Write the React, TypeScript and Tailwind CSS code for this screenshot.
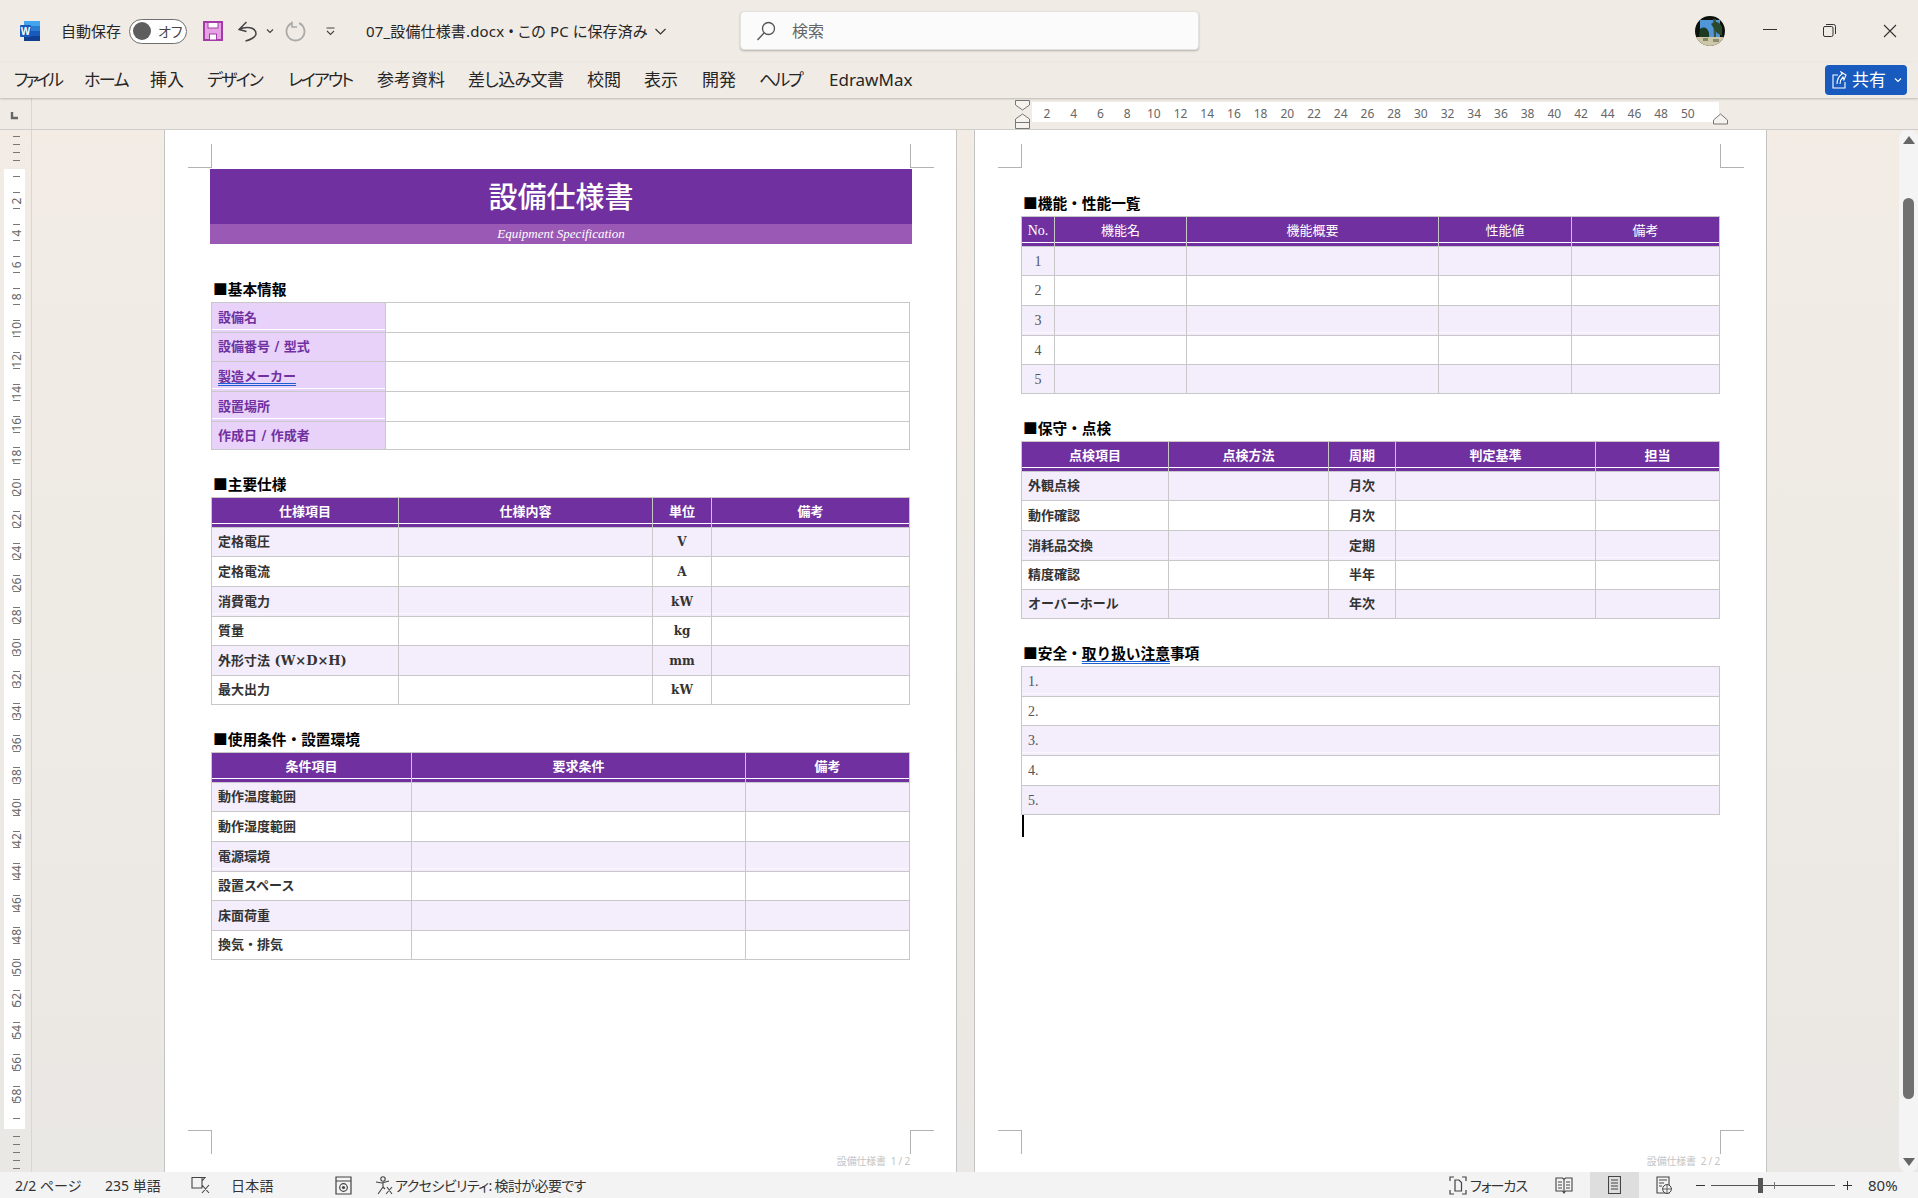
import React from 'react';

const uiFont = "font-['Noto_Sans','Noto_Sans_CJK_JP',sans-serif] [font-feature-settings:'palt']";
const docFont = "font-['Liberation_Serif','Noto_Sans_CJK_JP',serif] [font-feature-settings:normal]";
const boldFont = "font-['DejaVu_Serif','Noto_Sans_CJK_JP',serif]";

const rowH: Record<number, string> = { 28: 'h-[28px]', 29: 'h-[29px]', 30: 'h-[30px]' };

// white hairline Word leaves near the bottom of some cells
const seam = 'shadow-[inset_0_-2px_0_#F3EDFC,inset_0_-3px_0_#FBF9FF]';
const labelSeam = 'shadow-[inset_0_-2px_0_#E8D2FA,inset_0_-3px_0_#FFFFFF]';

const TABS: [string, string][] = [
  ['ファイル', 'w-[70px] tracking-[-3px]'],
  ['ホーム', 'w-[66px] tracking-[-1.6px]'],
  ['挿入', 'w-[57px]'],
  ['デザイン', 'w-[81px] tracking-[-1.8px]'],
  ['レイアウト', 'w-[89px] tracking-[-2px]'],
  ['参考資料', 'w-[91px]'],
  ['差し込み文書', 'w-[119px] tracking-[-0.6px]'],
  ['校閲', 'w-[57px]'],
  ['表示', 'w-[58px]'],
  ['開発', 'w-[57px]'],
  ['ヘルプ', 'w-[70px] tracking-[-2px]'],
  ['EdrawMax', 'w-[90px]'],
];

function WordIcon() {
  return (
    <svg width="20" height="20" viewBox="0 0 20 20" className="shrink-0">
      <rect x="4" y="0" width="16" height="5" fill="#41A5EE" />
      <rect x="4" y="5" width="16" height="5" fill="#2B7CD3" />
      <rect x="4" y="10" width="16" height="5" fill="#185ABD" />
      <rect x="4" y="15" width="16" height="5" fill="#103F91" />
      <rect x="0" y="4" width="11" height="12" rx="1" fill="#185ABD" />
      <text x="5.5" y="13.5" textAnchor="middle" fontSize="10" fontWeight="700" fill="#fff" fontFamily="Liberation Sans">W</text>
    </svg>
  );
}

function SaveIcon() {
  return (
    <svg width="20" height="20" viewBox="0 0 20 20" className="ml-[16px] shrink-0">
      <path d="M1 1H19V19H1Z" fill="#E5A3E3" stroke="#A53BA8" strokeWidth="2" />
      <rect x="5" y="1.5" width="10" height="5.5" fill="#fff" stroke="#A53BA8" />
      <rect x="6.5" y="13" width="7" height="6" fill="#fff" stroke="#A53BA8" />
    </svg>
  );
}

function Small({ className = '' }: { className?: string }) {
  return (
    <svg width="8" height="6" viewBox="0 0 8 6" className={`shrink-0 ${className}`}>
      <path d="M1 1.5 4 4.5 7 1.5" fill="none" stroke="#444" strokeWidth="1.2" />
    </svg>
  );
}

function Avatar() {
  return (
    <svg width="30" height="30" viewBox="0 0 30 30" className="ml-[496px] mt-[-1px] shrink-0">
      <defs>
        <clipPath id="av"><circle cx="15" cy="15" r="15" /></clipPath>
      </defs>
      <g clipPath="url(#av)">
        <rect width="30" height="30" fill="#0d120c" />
        <rect x="5" y="4" width="20" height="17" fill="#4f97d8" />
        <path d="M5 13 C9 10 13 12 14 17 L14 21 L4 21Z" fill="#1d3a22" />
        <path d="M18 3 L21 3 L21 21 L19 21Z" fill="#40533a" />
        <path d="M16 8 C20 4 26 6 27 12 L27 20 L22 17Z" fill="#2b4a2d" />
        <rect x="0" y="21" width="30" height="9" fill="#cdc7a8" />
        <rect x="8" y="22" width="5" height="3" fill="#7f8a6b" />
        <rect x="18" y="23" width="6" height="3" fill="#8c8a70" />
      </g>
    </svg>
  );
}

function TitleBar() {
  return (
    <div className="flex h-[62px] shrink-0 items-center pl-[20px] text-[15px] text-[#262626]">
      <WordIcon />
      <span className="ml-[21px] w-[60px] shrink-0 whitespace-nowrap">自動保存</span>
      <div className="ml-[8px] flex h-[25px] w-[58px] shrink-0 items-center rounded-full border border-[#6f6f6f] bg-white pl-[3px]">
        <span className="h-[18px] w-[18px] rounded-full bg-[#5e5e5e]" />
        <span className="ml-[7px] text-[14px] text-[#444]">オフ</span>
      </div>
      <SaveIcon />
      <svg width="19" height="21" viewBox="0 0 19 21" className="ml-[15px] shrink-0">
        <path d="M8.5 1 1 8.5 8.5 10.5M1 8.5C8 5 18 6 18 13 18 16 12 19 7.5 20" fill="none" stroke="#444" strokeWidth="1.5" />
      </svg>
      <Small className="ml-[9px]" />
      <svg width="21" height="21" viewBox="0 0 21 21" className="ml-[11px] shrink-0">
        <path d="M7 2.2A9 9 0 1 0 14 2.2" fill="none" stroke="#aaa" strokeWidth="1.8" />
        <path d="M7 0.5 7 6 12 6" fill="none" stroke="#aaa" strokeWidth="1.6" />
      </svg>
      <svg width="9" height="9" viewBox="0 0 9 9" className="ml-[20px] shrink-0">
        <path d="M0.5 1H8.5M1 4 4.5 7.5 8 4" fill="none" stroke="#444" strokeWidth="1.1" />
      </svg>
      <div className="ml-[31px] flex w-[374px] shrink-0 items-center whitespace-nowrap">
        <span className="tracking-[0.15px]">07_設備仕様書.docx • この PC に保存済み</span>
        <svg width="11" height="7" viewBox="0 0 11 7" className="ml-[7px] shrink-0">
          <path d="M0.5 1 5.5 6 10.5 1" fill="none" stroke="#333" strokeWidth="1.2" />
        </svg>
      </div>
      <div className="mt-[-1px] flex h-[39px] w-[459px] shrink-0 items-center rounded-[4px] border border-[#e4e2df] bg-[#fbfbfb] pl-[15px] shadow-[0_1px_2px_rgba(0,0,0,0.25)]">
        <svg width="20" height="20" viewBox="0 0 20 20" className="shrink-0">
          <circle cx="12.5" cy="7.5" r="6" fill="none" stroke="#555" strokeWidth="1.3" />
          <path d="M8 12 1.5 19" stroke="#555" strokeWidth="1.4" />
        </svg>
        <span className="ml-[16px] text-[16px] text-[#666]">検索</span>
      </div>
      <Avatar />
      <div className="ml-[38px] mt-[-3px] h-px w-[14px] shrink-0 bg-[#333]" />
      <svg width="13" height="13" viewBox="0 0 13 13" className="ml-[46px] mt-[-1px] shrink-0">
        <rect x="0.5" y="2.5" width="9.5" height="10" rx="1.5" fill="none" stroke="#333" />
        <path d="M3 0.5H10.5A2 2 0 0 1 12.5 2.5V10" fill="none" stroke="#333" />
      </svg>
      <svg width="14" height="14" viewBox="0 0 14 14" className="ml-[47px] mt-[-1px] shrink-0">
        <path d="M1 1 13 13M13 1 1 13" stroke="#333" strokeWidth="1.1" />
      </svg>
    </div>
  );
}

function TabBar() {
  return (
    <div className="relative z-10 flex h-[36px] shrink-0 items-center pl-[14px] pr-[11px] text-[17px] text-[#262626] shadow-[0_1px_2px_rgba(0,0,0,0.22)]">
      {TABS.map(([name, w]) => (
        <span key={name} className={`${w} shrink-0 whitespace-nowrap`}>{name}</span>
      ))}
      <div className="ml-auto flex h-[30px] w-[82px] items-center rounded-[4px] bg-[#185ABD] pl-[7px] text-white">
        <svg width="15" height="18" viewBox="0 0 15 18" className="shrink-0">
          <path d="M6 4H1V17H13V11M5 13C5 8 7 5 10 3L9 1 14 4 12 9 11 6C9 8 8 10 8 13" fill="none" stroke="#fff" strokeWidth="1.1" />
        </svg>
        <span className="ml-[5px] w-[34px] whitespace-nowrap">共有</span>
        <svg width="8" height="6" viewBox="0 0 8 6" className="ml-[8px] shrink-0">
          <path d="M1 1.5 4 4.5 7 1.5" fill="none" stroke="#fff" strokeWidth="1.2" />
        </svg>
      </div>
    </div>
  );
}

function TopRuler() {
  const nums = Array.from({ length: 25 }, (_, i) => (i + 1) * 2);
  return (
    <div className="h-[32px] shrink-0 border-b border-[#cfcdca]">
      <svg width="1918" height="31" viewBox="0 0 1918 31" className="block">
        <path d="M12 14V20H18" fill="none" stroke="#666" strokeWidth="2.4" />
        <line x1="31.5" y1="0" x2="31.5" y2="31" stroke="#dcd8d3" />
        <rect x="1032" y="4" width="687" height="20" fill="#fff" />
        {nums.map((n, i) => (
          <text key={n} x={1047 + i * 26.7} y="20" textAnchor="middle" fontSize="12" fill="#666" fontFamily="Noto Sans">{n}</text>
        ))}
        <path d="M1015.5 2.5H1029.5V7L1022.5 12L1015.5 7Z" fill="#f6f3ef" stroke="#777" />
        <path d="M1015.5 21L1022.5 16L1029.5 21V30.5H1015.5Z" fill="#f6f3ef" stroke="#777" />
        <path d="M1015.5 24.5H1029.5" stroke="#777" />
        <path d="M1713.5 26V22L1720.5 16L1727.5 22V26Z" fill="#f6f3ef" stroke="#777" />
      </svg>
    </div>
  );
}

function SideRuler() {
  const ticksIn = Array.from({ length: 60 }, (_, i) => 46 + i * 15.97);
  const outside = [6, 14, 22, 30, 1006, 1014, 1022, 1030, 1038];
  const nums = Array.from({ length: 29 }, (_, i) => (i + 1) * 2);
  return (
    <div className="w-[32px] shrink-0 border-r border-[#d9d6d1]">
      <svg width="31" height="1042" viewBox="0 0 31 1042" className="block">
        <rect x="4" y="39" width="21" height="960" fill="#fff" />
        {outside.map((y) => (
          <line key={y} x1="13" y1={y + 0.5} x2="20" y2={y + 0.5} stroke="#777" />
        ))}
        {ticksIn.filter((y) => y < 995).map((y) => (
          <line key={y} x1="13" y1={Math.round(y) + 0.5} x2="20" y2={Math.round(y) + 0.5} stroke="#777" />
        ))}
        {nums.map((n, i) => {
          const y = 71 + i * 31.95;
          return (
            <text key={n} x="17" y={y} transform={`rotate(-90 17 ${y})`} dy="4" textAnchor="middle" fontSize="12" fill="#666" fontFamily="Noto Sans">{n}</text>
          );
        })}
      </svg>
    </div>
  );
}

function Crop({ className }: { className: string }) {
  return <div className={`absolute h-[24px] w-[24px] border-[#b2b2b2] ${className}`} />;
}

function PageMarks({ footer }: { footer: string }) {
  return (
    <>
      <Crop className="left-[23px] top-[14px] border-b border-r" />
      <Crop className="left-[745px] top-[14px] border-b border-l" />
      <Crop className="left-[23px] top-[1000px] border-r border-t" />
      <Crop className="left-[745px] top-[1000px] border-l border-t" />
      <span className={`absolute right-[46px] top-[1024px] whitespace-pre text-[10px] tracking-[-0.2px] text-[#c4c4c4] ${uiFont}`}>{footer}</span>
    </>
  );
}

function Heading({ children, className = '' }: { children: React.ReactNode; className?: string }) {
  return (
    <div className={`mb-[2px] flex h-[22px] items-center pl-[3px] font-['Noto_Sans_CJK_JP',serif] text-[14.7px] font-bold text-black ${className}`}>
      <span className="whitespace-nowrap">{children}</span>
    </div>
  );
}

interface SheetProps {
  cols: string;
  head: string[];
  rows: string[][];
  heights: number[];
  center?: number;
  plain?: boolean;
  seamRow?: number;
}

// latin runs in the original are visibly larger / wider than the kanji next to them
function cellText(c: string, plain?: boolean) {
  if (!/^[A-Za-z0-9.]+$/.test(c)) return c;
  return <span className={plain ? 'text-[14px]' : 'text-[12px]'}>{c}</span>;
}

function Sheet({ cols, head, rows, heights, center, plain, seamRow }: SheetProps) {
  const weight = plain ? 'font-normal' : `font-bold ${boldFont}`;
  return (
    <div className="ml-px w-[699px] border-x border-t border-[#c8c8c8] text-[13px]">
      <div className={`grid h-[30px] border-b border-[#c8c8c8] bg-[#7030A0] text-white ${cols}`}>
        {head.map((h) => (
          <div key={h} className={`flex items-center justify-center border-r border-[#c8c8c8] pb-[2px] shadow-[inset_0_-3px_0_#7030A0,inset_0_-4px_0_#fff] last:border-r-0 ${weight}`}>
            {cellText(h, plain)}
          </div>
        ))}
      </div>
      {rows.map((row, i) => (
        <div key={i} className={`grid border-b border-[#c8c8c8] ${plain ? 'text-[#555]' : 'text-[#333]'} ${cols} ${rowH[heights[i]]} ${i % 2 === 0 ? 'bg-[#F3EDFC]' : 'bg-white'}`}>
          {row.map((c, j) => (
            <div
              key={j}
              className={`flex items-center border-r border-[#c8c8c8] last:border-r-0 ${j === center ? 'justify-center' : 'pl-[6px]'} ${weight} ${i === seamRow ? seam : ''}`}
            >
              {cellText(c, plain)}
            </div>
          ))}
        </div>
      ))}
    </div>
  );
}

function BasicInfo() {
  const items: [string, number, boolean][] = [
    ['設備名', 30, true],
    ['設備番号 / 型式', 29, false],
    ['製造メーカー', 30, true],
    ['設置場所', 30, true],
    ['作成日 / 作成者', 28, false],
  ];
  return (
    <div className={`ml-px w-[699px] border-x border-t border-[#c8c8c8] text-[13px] font-bold ${boldFont}`}>
      {items.map(([label, h, s]) => (
        <div key={label} className={`grid grid-cols-[174px_1fr] border-b border-[#c8c8c8] ${rowH[h]}`}>
          <div className={`flex items-center border-r border-[#c8c8c8] bg-[#E8D2FA] pl-[6px] text-[#7030A0] ${s ? labelSeam : ''}`}>
            {label === '製造メーカー' ? (
              <span className="underline decoration-[#1b5fd0] decoration-double underline-offset-[2px] [text-decoration-skip-ink:none]">{label}</span>
            ) : label}
          </div>
          <div className="bg-white" />
        </div>
      ))}
    </div>
  );
}

function PageOne() {
  return (
    <div className={`relative h-full w-[793px] shrink-0 border-x border-[#c4c4c4] bg-white pl-[45px] pt-[39px] ${docFont}`}>
      <PageMarks footer="設備仕様書  1 / 2" />
      <div className="flex h-[55px] w-[702px] items-center justify-center bg-[#7030A0] pt-[4px] text-[29px] font-medium text-white">設備仕様書</div>
      <div className="flex h-[20px] w-[702px] items-center justify-center bg-[#9B59B6] text-[13px] italic text-white">Equipment Specification</div>

      <Heading className="mt-[34px]">■基本情報</Heading>
      <BasicInfo />

      <Heading className="mt-[23px]">■主要仕様</Heading>
      <Sheet
        cols="grid-cols-[187px_254px_59px_1fr]"
        head={['仕様項目', '仕様内容', '単位', '備考']}
        rows={[
          ['定格電圧', '', 'V', ''],
          ['定格電流', '', 'A', ''],
          ['消費電力', '', 'kW', ''],
          ['質量', '', 'kg', ''],
          ['外形寸法 (W×D×H)', '', 'mm', ''],
          ['最大出力', '', 'kW', ''],
        ]}
        heights={[29, 30, 30, 29, 30, 29]}
        center={2}
        seamRow={2}
      />

      <Heading className="mt-[23px]">■使用条件・設置環境</Heading>
      <Sheet
        cols="grid-cols-[200px_334px_1fr]"
        head={['条件項目', '要求条件', '備考']}
        rows={[
          ['動作温度範囲', '', ''],
          ['動作湿度範囲', '', ''],
          ['電源環境', '', ''],
          ['設置スペース', '', ''],
          ['床面荷重', '', ''],
          ['換気・排気', '', ''],
        ]}
        heights={[29, 30, 30, 29, 30, 29]}
        seamRow={2}
      />
    </div>
  );
}

function PageTwo() {
  const notes: [string, number, boolean][] = [
    ['1.', 30, true],
    ['2.', 29, false],
    ['3.', 30, true],
    ['4.', 30, false],
    ['5.', 29, false],
  ];
  return (
    <div className={`relative h-full w-[793px] shrink-0 border-x border-[#c4c4c4] bg-white pl-[45px] pt-[62px] ${docFont}`}>
      <PageMarks footer="設備仕様書  2 / 2" />
      <Heading>■機能・性能一覧</Heading>
      <Sheet
        cols="grid-cols-[33px_132px_252px_133px_1fr]"
        head={['No.', '機能名', '機能概要', '性能値', '備考']}
        rows={[
          ['1', '', '', '', ''],
          ['2', '', '', '', ''],
          ['3', '', '', '', ''],
          ['4', '', '', '', ''],
          ['5', '', '', '', ''],
        ]}
        heights={[29, 30, 30, 29, 29]}
        center={0}
        plain
        seamRow={2}
      />

      <Heading className="mt-[23px]">■保守・点検</Heading>
      <Sheet
        cols="grid-cols-[147px_160px_67px_200px_1fr]"
        head={['点検項目', '点検方法', '周期', '判定基準', '担当']}
        rows={[
          ['外観点検', '', '月次', '', ''],
          ['動作確認', '', '月次', '', ''],
          ['消耗品交換', '', '定期', '', ''],
          ['精度確認', '', '半年', '', ''],
          ['オーバーホール', '', '年次', '', ''],
        ]}
        heights={[29, 30, 30, 29, 29]}
        center={2}
        seamRow={2}
      />

      <Heading className="mt-[23px]">
        ■安全・<span className="underline decoration-[#1b5fd0] decoration-double underline-offset-[2px] [text-decoration-skip-ink:none]">取り扱い注意</span>事項
      </Heading>
      <div className="ml-px w-[699px] border-x border-t border-[#c8c8c8] text-[14px] text-[#555]">
        {notes.map(([n, h, s], i) => (
          <div key={n} className={`flex items-center border-b border-[#c8c8c8] pl-[6px] ${rowH[h]} ${i % 2 === 0 ? 'bg-[#F3EDFC]' : 'bg-white'} ${s ? seam : ''}`}>
            {n}
          </div>
        ))}
      </div>
      <div className="ml-[2px] h-[22px] w-[1.5px] bg-black" />
    </div>
  );
}

function ScrollBar() {
  return (
    <div className="flex h-full w-[19px] shrink-0 flex-col items-center rounded-[8px] bg-[#f4f4f4] pb-[6px] pt-[6px]">
      <svg width="12" height="9" viewBox="0 0 12 9" className="shrink-0">
        <path d="M6 0 12 8H0Z" fill="#666" />
      </svg>
      <div className="mt-[53px] h-[901px] w-[11px] shrink-0 rounded-full bg-[#707070]" />
      <svg width="12" height="9" viewBox="0 0 12 9" className="mt-auto shrink-0">
        <path d="M6 9 12 1H0Z" fill="#666" />
      </svg>
    </div>
  );
}

function StatusBar() {
  return (
    <div className="flex h-[26px] shrink-0 items-center bg-[#f3f3f3] pl-[15px] text-[14px] text-[#333]">
      <span className="w-[90px] shrink-0 whitespace-nowrap">2/2 ページ</span>
      <span className="w-[86px] shrink-0 whitespace-nowrap">235 単語</span>
      <svg width="19" height="18" viewBox="0 0 19 18" className="shrink-0">
        <path d="M1 1.5H11V12H1ZM11 9 18 17M18 9 11 17M11 1.5H14L11 5" fill="none" stroke="#444" strokeWidth="1.1" />
      </svg>
      <span className="ml-[21px] w-[104px] shrink-0 whitespace-nowrap tracking-[0.3px]">日本語</span>
      <svg width="17" height="19" viewBox="0 0 17 19" className="shrink-0">
        <path d="M1 1H16V18H1ZM1 5H16" fill="none" stroke="#444" strokeWidth="1.2" />
        <circle cx="8.5" cy="11.5" r="3.8" fill="none" stroke="#444" strokeWidth="1.2" />
        <circle cx="8.5" cy="11.5" r="1.6" fill="#444" />
      </svg>
      <svg width="18" height="19" viewBox="0 0 18 19" className="ml-[23px] shrink-0">
        <circle cx="8" cy="3" r="2.2" fill="none" stroke="#444" strokeWidth="1.1" />
        <path d="M1 6 7 7 14 5M8 7V11L3 18M8 11 10 13M12 11 17 18M17 11 11 18" fill="none" stroke="#444" strokeWidth="1.1" />
      </svg>
      <span className="ml-[2px] w-[1054px] shrink-0 whitespace-nowrap tracking-[-0.6px]">アクセシビリティ: 検討が必要です</span>
      <svg width="18" height="19" viewBox="0 0 18 19" className="shrink-0">
        <path d="M1 5V1H5M13 1H17V5M1 14V18H5M13 18H17V14" fill="none" stroke="#444" strokeWidth="1.2" />
        <path d="M6 4H10L12.5 6.5V15H6Z" fill="none" stroke="#444" strokeWidth="1.2" />
      </svg>
      <span className="ml-[3px] w-[85px] shrink-0 whitespace-nowrap tracking-[-1px]">フォーカス</span>
      <svg width="18" height="18" viewBox="0 0 18 18" className="shrink-0">
        <path d="M1 2H7.5L9 3.5 10.5 2H17V15H10.5L9 17 7.5 15H1ZM9 3.5V17M3 6H7M3 9H7M3 12H7M11 6H15M11 9H15M11 12H15" fill="none" stroke="#444" strokeWidth="1.1" />
      </svg>
      <div className="ml-[17px] flex h-full w-[49px] shrink-0 items-center justify-center bg-[#dedede]">
        <svg width="13" height="18" viewBox="0 0 13 18">
          <path d="M0.5 0.5H12.5V17.5H0.5ZM3 4H10M3 7H10M3 10H10M3 13H10" fill="none" stroke="#444" strokeWidth="1.1" />
        </svg>
      </div>
      <svg width="16" height="18" viewBox="0 0 16 18" className="ml-[17px] shrink-0">
        <path d="M1 1H13V17H1ZM3 4H11M3 7H8M3 10H6" fill="none" stroke="#444" strokeWidth="1.1" />
        <circle cx="11" cy="13" r="4.4" fill="#f3f3f3" stroke="#444" />
        <path d="M6.6 13H15.4M11 8.6V17.4" stroke="#444" strokeWidth="0.8" />
      </svg>
      <div className="ml-[24px] h-px w-[9px] shrink-0 bg-[#333]" />
      <div className="relative ml-[6px] h-px w-[124px] shrink-0 bg-[#555]">
        <div className="absolute left-[47px] top-[-7px] h-[15px] w-[5px] bg-[#555]" />
        <div className="absolute left-[63px] top-[-3px] h-[7px] w-px bg-[#777]" />
      </div>
      <svg width="9" height="9" viewBox="0 0 9 9" className="ml-[8px] shrink-0">
        <path d="M0 4.5H9M4.5 0V9" stroke="#333" />
      </svg>
      <span className="ml-[16px] whitespace-nowrap text-[15px]">80%</span>
    </div>
  );
}

export default function App() {
  return (
    <div className={`flex h-[1198px] w-[1918px] flex-col overflow-hidden bg-[#f0ebe5] ${uiFont}`}>
      <TitleBar />
      <TabBar />
      <TopRuler />
      <div className="flex min-h-0 flex-1 bg-gradient-to-b from-[#f2ece5] to-[#eae8e4]">
        <SideRuler />
        <div className="w-[132px] shrink-0" />
        <PageOne />
        <div className="w-[17px] shrink-0" />
        <PageTwo />
        <div className="w-[132px] shrink-0" />
        <ScrollBar />
      </div>
      <StatusBar />
    </div>
  );
}
